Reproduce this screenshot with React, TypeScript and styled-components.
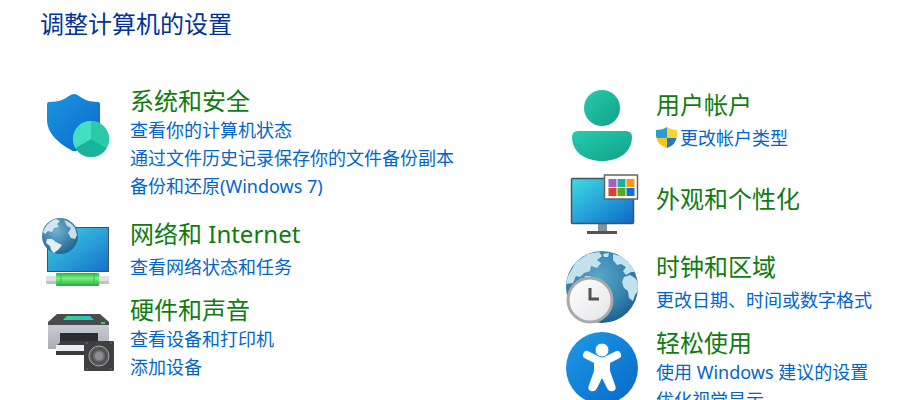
import React from "react";
import styled, { createGlobalStyle } from "styled-components";

const GlobalStyle = createGlobalStyle`
  * { box-sizing: border-box; }
  body {
    margin: 0;
    background: #fff;
    font-family: "Noto Sans", "Noto Sans CJK SC", sans-serif;
  }
`;

const Page = styled.main`
  height: 100vh;
  overflow: hidden;
  padding: 8px 24px 0 40px;
`;

const Title = styled.h1`
  margin: 0;
  font-size: 24px;
  line-height: 32px;
  font-weight: 400;
  color: #003399;
`;

const Columns = styled.div`
  display: grid;
  grid-template-columns: 63fr 37fr;
  align-items: start;
`;

const Column = styled.div<{ $top: number }>`
  display: flex;
  flex-direction: column;
  padding-top: ${(p) => p.$top}px;
`;

const Category = styled.section<{ $before?: number; $centered?: boolean }>`
  display: grid;
  grid-template-columns: 72px 1fr;
  column-gap: 18px;
  align-items: ${(p) => (p.$centered ? "center" : "start")};
  margin-top: ${(p) => p.$before ?? 0}px;
`;

const Icon = styled.svg<{ $drop?: number }>`
  display: block;
  width: 72px;
  height: 72px;
  margin-top: ${(p) => p.$drop ?? 0}px;
  overflow: visible;
`;

const Heading = styled.h2<{ $loose?: boolean }>`
  margin: 0 0 ${(p) => (p.$loose ? 4 : 0)}px;
  font-size: 24px;
  line-height: 30px;
  font-weight: 400;
  white-space: nowrap;
`;

const HeadingLink = styled.a`
  color: #107c10;
  text-decoration: none;
`;

const Tasks = styled.ul`
  margin: 0;
  padding: 0;
  list-style: none;
`;

const Task = styled.li`
  display: flex;
  align-items: center;
  gap: 2px;
  height: 28px;
  font-size: 18px;
  line-height: 28px;
  white-space: nowrap;
`;

const TaskLink = styled.a`
  color: #0066cc;
  text-decoration: none;
`;

const Badge = styled.svg`
  width: 22px;
  height: 22px;
`;

function SecurityIcon() {
  return (
    <Icon $drop={4} viewBox="0 0 72 72" aria-hidden="true">
      <defs>
        <linearGradient id="shield" x1="0" y1="0" x2="1" y2="1">
          <stop offset="0" stopColor="#1b95e0" />
          <stop offset="1" stopColor="#0a6acb" />
        </linearGradient>
      </defs>
      <path d="M7 14Q7 12 9 12C19 12 25 9 29 6Q34 2 39 6C43 9 49 12 58 12Q60 12 60 14V32C60 48 48 56 36 61Q34 62 31 60C18 53 7 43 7 30Z" fill="url(#shield)" />
      <circle cx="51" cy="49" r="18" fill="#35d3b4" />
      <path d="M51 49V31A18 18 0 0 1 66.6 58Z" fill="#2bc9a9" />
      <path d="M51 49L66.6 58A18 18 0 0 1 35.4 58Z" fill="#1cb498" />
      <path d="M51 49L35.4 58A18 18 0 0 1 51 31Z" fill="#42dfc2" />
    </Icon>
  );
}

function NetworkIcon() {
  return (
    <Icon viewBox="0 0 72 72" aria-hidden="true">
      <defs>
        <linearGradient id="netScreen" x1="0" y1="0" x2="1" y2="1">
          <stop offset="0" stopColor="#45cfe2" />
          <stop offset="0.5" stopColor="#2aa3d8" />
          <stop offset="1" stopColor="#1670c8" />
        </linearGradient>
        <radialGradient id="netGlobe" cx="0.4" cy="0.35" r="0.7">
          <stop offset="0" stopColor="#70b2d2" />
          <stop offset="1" stopColor="#1d638f" />
        </radialGradient>
        <linearGradient id="cable" x1="0" y1="0" x2="0" y2="1">
          <stop offset="0" stopColor="#22b535" />
          <stop offset="0.4" stopColor="#7cf18a" />
          <stop offset="1" stopColor="#1fae32" />
        </linearGradient>
      </defs>
      <rect x="7.5" y="8.5" width="61" height="44" fill="url(#netScreen)" stroke="#3d5363" />
      <rect x="6" y="57" width="63" height="8" rx="1" fill="#dfe1e3" />
      <path d="M6 62H69V64Q69 65 68 65H7Q6 65 6 64Z" fill="#bec2c4" />
      <rect x="16" y="54" width="43" height="13" rx="1" fill="url(#cable)" />
      <path d="M21 54V67M54 54V67" stroke="#35b947" />
      <circle cx="20" cy="17" r="18" fill="url(#netGlobe)" />
      <path d="M5 9Q9 2 16 0L20 2L17 5L19 8L14 9L12 13L8 12L5 15L3 13Z" fill="#d3e7ee" />
      <path d="M7 20L12 20L16 23L22 26L19 30L14 34L11 31L10 27L6 24Z" fill="#e2eff3" />
      <path d="M24 1Q31 3 35 9L37 16L35 20L31 19L28 14L31 9L27 7Z" fill="#c6dfe8" />
    </Icon>
  );
}

function HardwareIcon() {
  return (
    <Icon $drop={12} viewBox="0 0 72 72" aria-hidden="true">
      <defs>
        <linearGradient id="glass" x1="0" y1="0" x2="1" y2="0">
          <stop offset="0" stopColor="#3fd47f" />
          <stop offset="1" stopColor="#18c2cf" />
        </linearGradient>
        <linearGradient id="printer" x1="0" y1="0" x2="0" y2="1">
          <stop offset="0" stopColor="#c8cbd2" />
          <stop offset="1" stopColor="#a9adb5" />
        </linearGradient>
        <radialGradient id="cone">
          <stop offset="0" stopColor="#d0d1d2" />
          <stop offset="0.35" stopColor="#777" />
          <stop offset="1" stopColor="#555" />
        </radialGradient>
      </defs>
      <path d="M17 7H60L69 15V18H8V15Z" fill="#4a4b4e" />
      <path d="M27 9H50L54 13H23Z" fill="url(#glass)" />
      <path d="M8 18H69V41Q69 42 68 42H9Q8 42 8 41Z" fill="url(#printer)" />
      <rect x="61" y="15" width="4" height="2" fill="#35d14c" />
      <path d="M20 26H58V38H20Z" fill="#2c2d30" />
      <path d="M22 34H56L60 39H16Z" fill="#3d3e42" />
      <path d="M16 38H60V44H16Z" fill="#edeef0" />
      <path d="M16 44H60V48H16Z" fill="#393a3d" />
      <rect x="44" y="34" width="30" height="30" rx="1" fill="#404043" />
      <circle cx="59" cy="49" r="10" fill="url(#cone)" stroke="#a4a5a7" strokeWidth="1" />
      <circle cx="59" cy="49" r="7" fill="none" stroke="#4f5052" strokeWidth="2" />
      <circle cx="59" cy="49" r="4" fill="#8c8e90" />
      <path d="M46 36h2M70 36h2M46 62h2M70 62h2" stroke="#717174" strokeWidth="1" />
    </Icon>
  );
}

function UserIcon() {
  return (
    <Icon viewBox="0 0 72 72" aria-hidden="true">
      <defs>
        <linearGradient id="user" x1="0" y1="0" x2="1" y2="1">
          <stop offset="0" stopColor="#27ccb0" />
          <stop offset="1" stopColor="#10a088" />
        </linearGradient>
      </defs>
      <circle cx="36" cy="18" r="18" fill="url(#user)" />
      <path d="M12 41H60Q66 41 66 47C66 62 53 71 36 71S6 62 6 47Q6 41 12 41Z" fill="url(#user)" />
    </Icon>
  );
}

const swatches = ["#9a62ce", "#1fae9b", "#f59a13", "#d8452f", "#56ab1b", "#0f72cf"];

function AppearanceIcon() {
  return (
    <Icon viewBox="0 0 72 72" aria-hidden="true">
      <defs>
        <linearGradient id="display" x1="0" y1="0" x2="1" y2="1">
          <stop offset="0" stopColor="#40dbe0" />
          <stop offset="0.5" stopColor="#25a3d8" />
          <stop offset="1" stopColor="#0c68c8" />
        </linearGradient>
      </defs>
      <rect x="32" y="61" width="9" height="8" fill="#83909a" />
      <rect x="21" y="68" width="30" height="3" fill="#4c565e" />
      <rect x="5.5" y="15.5" width="62" height="45" rx="1" fill="url(#display)" stroke="#45535d" strokeWidth="1.5" />
      <rect x="38.5" y="12" width="33" height="24" fill="#fff" stroke="#69625f" strokeWidth="1.5" />
      {swatches.map((color, i) => (
        <rect key={color} x={42.5 + (i % 3) * 9} y={16 + Math.floor(i / 3) * 9} width="8" height="8" fill={color} />
      ))}
    </Icon>
  );
}

function ClockIcon() {
  return (
    <Icon viewBox="0 0 72 72" aria-hidden="true">
      <defs>
        <radialGradient id="globe" cx="0.45" cy="0.35" r="0.65">
          <stop offset="0" stopColor="#5aa6ca" />
          <stop offset="0.7" stopColor="#317fab" />
          <stop offset="1" stopColor="#1f6290" />
        </radialGradient>
        <linearGradient id="dial" x1="0" y1="0" x2="1" y2="1">
          <stop offset="0" stopColor="#fff" />
          <stop offset="1" stopColor="#e4e5e7" />
        </linearGradient>
        <clipPath id="globeEdge"><circle cx="36" cy="35" r="36" /></clipPath>
      </defs>
      <circle cx="36" cy="35" r="36" fill="url(#globe)" />
      <g clipPath="url(#globeEdge)" fill="#c3e2ee">
        <path d="M2 24L10 10L22 2L33 0L36 4L31 8L35 11L31 16L25 14L24 19L18 21L14 25L10 24L7 31L0 32Z" />
        <path d="M19 24L25 24L23 27L18 27ZM37 2L43 1L42 5L38 5Z" />
        <path d="M47 2L57 5L66 14L69 20L65 20L60 23L57 19L60 15L55 12L51 13L47 8Z" />
        <path d="M58 25L64 23L69 26L72 30V39L69 43L67 49L63 46L62 39L58 36L56 30Z" />
      </g>
      <circle cx="24" cy="48" r="22" fill="url(#dial)" stroke="#a7a9aa" strokeWidth="3" />
      <path d="M24 36V47H33" fill="none" stroke="#515456" strokeWidth="3" />
    </Icon>
  );
}

function AccessIcon() {
  return (
    <Icon $drop={4} viewBox="0 0 72 72" aria-hidden="true">
      <defs>
        <linearGradient id="access" x1="0" y1="0" x2="1" y2="1">
          <stop offset="0" stopColor="#1d9ae6" />
          <stop offset="1" stopColor="#0868c8" />
        </linearGradient>
      </defs>
      <circle cx="36" cy="36" r="36" fill="url(#access)" />
      <path d="M21 23L31 28H41L51 23" fill="none" stroke="#fff" strokeWidth="8" strokeLinecap="round" strokeLinejoin="round" />
      <path d="M28 28H44V39L49 53Q51 58 47 59Q43 60 41 56L36 46L31 56Q29 60 25 59Q21 58 23 53L28 39Z" fill="#fff" />
      <circle cx="36" cy="18" r="7" fill="#fff" stroke="#138adb" strokeWidth="1" />
    </Icon>
  );
}

function AdminShield() {
  return (
    <Badge viewBox="0 0 22 22" aria-hidden="true">
      <defs>
        <clipPath id="adminEdge">
          <path d="M0 3Q7 3 11 0Q15 3 21 3V9Q20 18 11 21Q1 18 0 9Z" />
        </clipPath>
      </defs>
      <g clipPath="url(#adminEdge)">
        <rect width="11" height="11" fill="#2e9bd3" />
        <rect x="11" width="11" height="11" fill="#fbd22d" />
        <rect y="11" width="11" height="11" fill="#f6c51d" />
        <rect x="11" y="11" width="11" height="11" fill="#2378bd" />
      </g>
    </Badge>
  );
}

type Entry = {
  name: string;
  icon: React.ReactNode;
  tasks: string[];
  before?: number;
  loose?: boolean;
  elevated?: boolean;
};

const leftEntries: Entry[] = [
  { name: "系统和安全", icon: <SecurityIcon />, tasks: ["查看你的计算机状态", "通过文件历史记录保存你的文件备份副本", "备份和还原(Windows 7)"] },
  { name: "网络和 Internet", icon: <NetworkIcon />, tasks: ["查看网络状态和任务"], before: 19, loose: true },
  { name: "硬件和声音", icon: <HardwareIcon />, tasks: ["查看设备和打印机", "添加设备"], before: 4 },
];

const rightEntries: Entry[] = [
  { name: "用户帐户", icon: <UserIcon />, tasks: ["更改帐户类型"], loose: true, elevated: true },
  { name: "外观和个性化", icon: <AppearanceIcon />, tasks: [], before: 1 },
  { name: "时钟和区域", icon: <ClockIcon />, tasks: ["更改日期、时间或数字格式"], before: 17, loose: true },
  { name: "轻松使用", icon: <AccessIcon />, tasks: ["使用 Windows 建议的设置", "优化视觉显示"], before: 4 },
];

function CategoryBlock({ entry }: { entry: Entry }) {
  return (
    <Category $before={entry.before} $centered={entry.tasks.length === 0}>
      {entry.icon}
      <div>
        <Heading $loose={entry.loose}>
          <HeadingLink href="#">{entry.name}</HeadingLink>
        </Heading>
        {entry.tasks.length > 0 && (
          <Tasks>
            {entry.tasks.map((task) => (
              <Task key={task}>
                {entry.elevated && <AdminShield />}
                <TaskLink href="#">{task}</TaskLink>
              </Task>
            ))}
          </Tasks>
        )}
      </div>
    </Category>
  );
}

export default function App() {
  return (
    <>
      <GlobalStyle />
      <Page>
        <Title>调整计算机的设置</Title>
        <Columns>
          <Column $top={46}>
            {leftEntries.map((entry) => <CategoryBlock key={entry.name} entry={entry} />)}
          </Column>
          <Column $top={50}>
            {rightEntries.map((entry) => <CategoryBlock key={entry.name} entry={entry} />)}
          </Column>
        </Columns>
      </Page>
    </>
  );
}
